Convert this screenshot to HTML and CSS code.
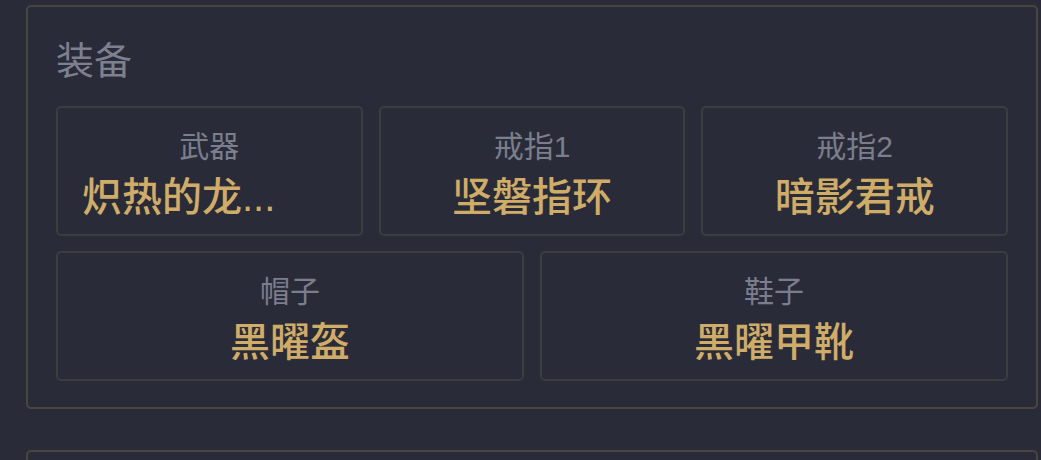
FILE: index.html
```html
<!DOCTYPE html>
<html lang="zh-CN">
<head>
<meta charset="utf-8">
<title>装备</title>
<link rel="stylesheet" href="styles.css">
</head>
<body>
  <main class="page">
    <section class="panel">
      <h2 class="panel-title">装备</h2>
      <div class="slots">
        <div class="slot slot--third">
          <span class="slot-label">武器</span>
          <span class="slot-value slot-value--clipped">炽热的龙...</span>
        </div>
        <div class="slot slot--third">
          <span class="slot-label">戒指1</span>
          <span class="slot-value">坚磐指环</span>
        </div>
        <div class="slot slot--third">
          <span class="slot-label">戒指2</span>
          <span class="slot-value">暗影君戒</span>
        </div>
        <div class="slot slot--half">
          <span class="slot-label">帽子</span>
          <span class="slot-value">黑曜盔</span>
        </div>
        <div class="slot slot--half">
          <span class="slot-label">鞋子</span>
          <span class="slot-value">黑曜甲靴</span>
        </div>
      </div>
    </section>
    <section class="panel panel--next"></section>
  </main>
</body>
</html>
```

FILE: styles.css
```css
html, body {
  margin: 0;
  height: 100%;
  overflow: hidden;
}

body {
  background: #2a2b38;
  font-family: "Liberation Sans", "Noto Sans CJK SC", sans-serif;
  color: #7c808f;
}

.page {
  display: flex;
  flex-direction: column;
  gap: 41px;
  padding: 5px 3px 0 26px;
}

.panel {
  border: 2px solid #48463f;
  border-radius: 5px;
  padding: 31px 28px 26px;
}

.panel--next {
  min-height: 200px;
}

.panel-title {
  margin: 0 0 22px;
  font-size: 38px;
  line-height: 46px;
  font-weight: 400;
  color: #7c808f;
}

.slots {
  display: grid;
  grid-template-columns: repeat(6, 1fr);
  column-gap: 16px;
  row-gap: 15px;
}

.slot {
  box-sizing: border-box;
  height: 130px;
  border: 2px solid #3d3c3e;
  border-radius: 5px;
  padding: 5px 24px 0;
  display: flex;
  flex-direction: column;
  justify-content: center;
  align-items: stretch;
  gap: 6px;
  text-align: center;
  min-width: 0;
}

.slot--third {
  grid-column: span 2;
}

.slot--half {
  grid-column: span 3;
}

.slot-label {
  font-size: 30px;
  line-height: 40px;
  color: #7a7e8d;
}

.slot-value {
  font-size: 40px;
  line-height: 48px;
  font-weight: 500;
  color: #cfad69;
  white-space: nowrap;
  overflow: hidden;
  text-overflow: ellipsis;
}

.slot-value--clipped {
  text-align: left;
}
```
